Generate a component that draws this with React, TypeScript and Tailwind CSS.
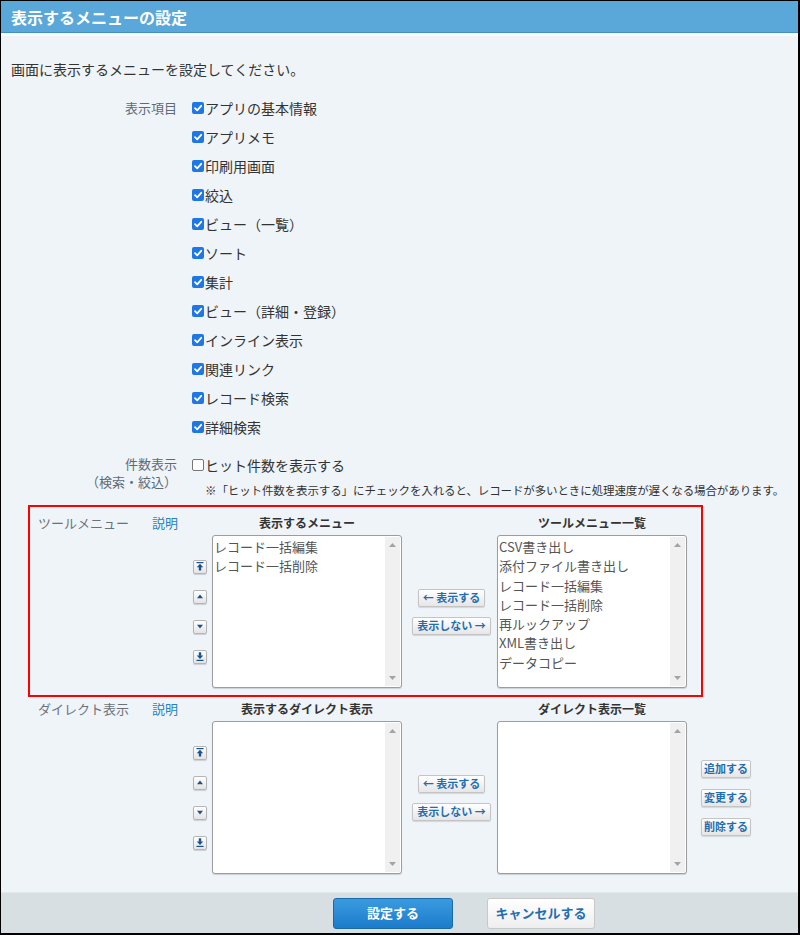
import React from "react";

const items = [
  "アプリの基本情報",
  "アプリメモ",
  "印刷用画面",
  "絞込",
  "ビュー（一覧）",
  "ソート",
  "集計",
  "ビュー（詳細・登録）",
  "インライン表示",
  "関連リンク",
  "レコード検索",
  "詳細検索",
];

function CheckBox({ checked }: { checked: boolean }) {
  if (checked) {
    return (
      <span className="w-[12px] h-[12px] rounded-[2px] bg-[#1f76e5] flex items-center justify-center shrink-0">
        <svg width="10" height="10" viewBox="0 0 10 10">
          <path d="M2 5.2 L4.2 7.4 L8.2 2.8" stroke="white" strokeWidth="1.8" fill="none" strokeLinecap="round" strokeLinejoin="round" />
        </svg>
      </span>
    );
  }
  return <span className="w-[12px] h-[12px] rounded-[2px] bg-white border border-[#767676] shrink-0" />;
}

function SmallBtn({ kind }: { kind: "top" | "up" | "down" | "bottom" }) {
  return (
    <div className="w-[14px] h-[14px] rounded-[2px] border border-[#b5b5b5] bg-gradient-to-b from-white to-[#e4e4e4] shadow-[0_1px_1px_rgba(0,0,0,0.15)] flex items-center justify-center">
      <svg width="8" height="9" viewBox="0 0 8 9" fill="#17528c">
        {kind === "top" && (
          <>
            <rect x="0.5" y="0" width="7" height="1.2" />
            <path d="M4 1.8 L7.2 5.2 H0.8 Z" />
            <rect x="2.8" y="5" width="2.4" height="3.5" />
          </>
        )}
        {kind === "up" && <path d="M4 2.5 L7 6.2 H1 Z" />}
        {kind === "down" && <path d="M1 2.8 H7 L4 6.5 Z" />}
        {kind === "bottom" && (
          <>
            <rect x="2.8" y="0.3" width="2.4" height="3.5" />
            <path d="M0.8 3.6 H7.2 L4 7 Z" />
            <rect x="0.5" y="7.8" width="7" height="1.2" />
          </>
        )}
      </svg>
    </div>
  );
}

function Btn({ children }: { children: React.ReactNode }) {
  return (
    <div className="h-[18px] px-[4px] rounded-[2px] border border-[#c4c4c4] bg-gradient-to-b from-white to-[#e6e6e6] shadow-[0_1px_1px_rgba(0,0,0,0.12)] flex items-center justify-center text-[11px] font-bold text-[#1f6db3] leading-none whitespace-nowrap">
      {children}
    </div>
  );
}

function ListBox({ entries }: { entries: string[] }) {
  return (
    <div className="w-[190px] h-[153px] bg-white border border-[#9d9d9d] rounded-[3px] shadow-[0_1px_1px_rgba(0,0,0,0.15)] flex">
      <div className="flex-1 pl-[1px] pt-[1px] text-[13px] leading-[19.3px] text-[#555]">
        {entries.map((e) => (
          <div key={e} className="whitespace-nowrap">{e}</div>
        ))}
      </div>
      <div className="w-[15px] my-[1px] mr-[1px] bg-[#f0f0f0] flex flex-col items-center justify-between py-[6px]">
        <svg width="7" height="4" viewBox="0 0 7 4"><path d="M3.5 0 L7 4 H0 Z" fill="#a3a3a3" /></svg>
        <svg width="7" height="4" viewBox="0 0 7 4"><path d="M0 0 H7 L3.5 4 Z" fill="#a3a3a3" /></svg>
      </div>
    </div>
  );
}

function Section({
  label,
  leftHead,
  rightHead,
  leftItems,
  rightItems,
  red,
  extra,
}: {
  label: string;
  leftHead: string;
  rightHead: string;
  leftItems: string[];
  rightItems: string[];
  red: boolean;
  extra: boolean;
}) {
  return (
    <div
      className={
        "ml-[27px] w-[675px] border-2 pl-[8px] " +
        (red ? "border-[#ff0000] pt-[7px] pb-[7px]" : "border-transparent pt-[1px]")
      }
    >
      <div className="grid grid-cols-[114px_41px_19px_190px_95px_190px_64px] grid-rows-[18px_auto] gap-y-[3px]">
        <div className="text-[13px] text-[#6b7179] leading-[18px] whitespace-nowrap">{label}</div>
        <div className="text-[13px] text-[#2a7fc3] leading-[18px]">説明</div>
        <div />
        <div className="text-[12px] font-bold text-[#333] leading-[18px] text-center">{leftHead}</div>
        <div />
        <div className="text-[12px] font-bold text-[#333] leading-[18px] text-center">{rightHead}</div>
        <div />

        <div />
        <div />
        <div className="flex flex-col justify-center gap-[16px]">
          <SmallBtn kind="top" />
          <SmallBtn kind="up" />
          <SmallBtn kind="down" />
          <SmallBtn kind="bottom" />
        </div>
        <ListBox entries={leftItems} />
        <div className="flex flex-col items-center justify-center gap-[10px] pl-[4px]">
          <Btn>← 表示する</Btn>
          <Btn>表示しない →</Btn>
        </div>
        <ListBox entries={rightItems} />
        <div className="flex flex-col justify-center gap-[11px] pl-[14px]">
          {extra && (
            <>
              <div className="w-[50px]"><Btn>追加する</Btn></div>
              <div className="w-[50px]"><Btn>変更する</Btn></div>
              <div className="w-[50px]"><Btn>削除する</Btn></div>
            </>
          )}
        </div>
      </div>
    </div>
  );
}

export default function App() {
  return (
    <div className="w-[800px] h-[935px] border-l border-t border-r-2 border-b-2 border-black bg-[#eff4f8] flex flex-col font-['Noto_Sans_CJK_JP','Noto_Sans',sans-serif] text-[#333] overflow-hidden">
      <div className="h-[31px] shrink-0 bg-[#5aa7da] flex items-center pl-[10px] text-white font-bold text-[16px] leading-none">
        表示するメニューの設定
      </div>
      <div className="h-[1px] shrink-0 bg-[#3f90cc]" />
      <div className="h-[3px] shrink-0 bg-[#fafcfd]" />

      <div className="flex-1 flex flex-col">
        <div className="pl-[10px] pt-[23px] text-[14px] leading-[20px] text-[#333]">
          画面に表示するメニューを設定してください。
        </div>

        <div className="mt-[14px] flex">
          <div className="w-[176px] text-right text-[13px] text-[#5d6b79] leading-[29px]">表示項目</div>
          <div className="ml-[15px] flex flex-col">
            {items.map((it) => (
              <div key={it} className="h-[29px] flex items-center text-[14px] text-[#333]">
                <CheckBox checked />
                <span className="ml-[1px] leading-none">{it}</span>
              </div>
            ))}
          </div>
        </div>

        <div className="mt-[9px] flex">
          <div className="w-[176px] text-right text-[13px] text-[#5d6b79] pt-[6px] flex flex-col">
            <div className="h-[17px] leading-[16px]">件数表示</div>
            <div className="h-[17px] leading-[18px]">（検索・絞込）</div>
          </div>
          <div className="ml-[15px] flex flex-col">
            <div className="h-[29px] flex items-center text-[14px] text-[#333]">
              <CheckBox checked={false} />
              <span className="ml-[1px] leading-none">ヒット件数を表示する</span>
            </div>
            <div className="pl-[13px] mt-[3px] text-[11.5px] leading-[16px] text-[#333] whitespace-nowrap tracking-[-0.01em]">
              ※「ヒット件数を表示する」にチェックを入れると、レコードが多いときに処理速度が遅くなる場合があります。
            </div>
          </div>
        </div>

        <div className="mt-[7px]">
          <Section
            red
            extra={false}
            label="ツールメニュー"
            leftHead="表示するメニュー"
            rightHead="ツールメニュー一覧"
            leftItems={["レコード一括編集", "レコード一括削除"]}
            rightItems={[
              "CSV書き出し",
              "添付ファイル書き出し",
              "レコード一括編集",
              "レコード一括削除",
              "再ルックアップ",
              "XML書き出し",
              "データコピー",
            ]}
          />
          <Section
            red={false}
            extra
            label="ダイレクト表示"
            leftHead="表示するダイレクト表示"
            rightHead="ダイレクト表示一覧"
            leftItems={[]}
            rightItems={[]}
          />
        </div>
      </div>

      <div className="h-[41px] shrink-0 bg-[#d7dfe3] border-t border-[#e2e9ed] flex items-center">
        <div className="ml-[332px] w-[120px] h-[31px] rounded-[3px] border border-[#1b6aa8] bg-gradient-to-b from-[#3a9ae0] to-[#1a7ccb] flex items-center justify-center text-white font-bold text-[13px]">
          設定する
        </div>
        <div className="ml-[34px] w-[108px] h-[31px] rounded-[3px] border border-[#c8c8c8] bg-gradient-to-b from-white to-[#eeeeee] flex items-center justify-center text-[#1f6db3] font-bold text-[13px]">
          キャンセルする
        </div>
      </div>
    </div>
  );
}
